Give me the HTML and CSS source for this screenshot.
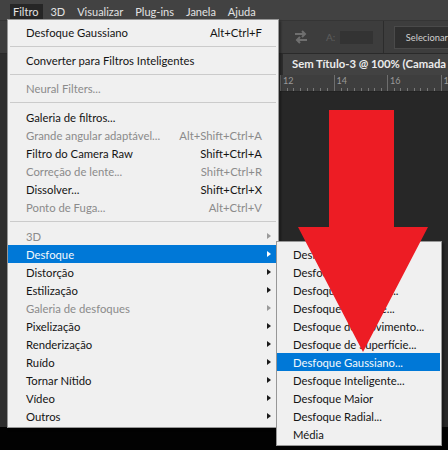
FILE: index.html
```html
<!DOCTYPE html>
<html lang="pt">
<head>
<meta charset="utf-8">
<title>Filtro</title>
<link rel="stylesheet" href="styles.css">
</head>
<body>
<div class="app">
  <div class="menubar">
    <span class="mb-item active">Filtro</span>
    <span class="mb-item">3D</span>
    <span class="mb-item">Visualizar</span>
    <span class="mb-item">Plug-ins</span>
    <span class="mb-item">Janela</span>
    <span class="mb-item">Ajuda</span>
  </div>
  <div class="optionsbar">
    <svg class="swap" width="14" height="16" viewBox="0 0 14 16"><path d="M1 5h10M8 2l3 3-3 3M13 11H3M6 8l-3 3 3 3" fill="none" stroke="#6f6f6f" stroke-width="2"/></svg>
    <span class="lbl">A:</span>
    <span class="field"></span>
    <span class="divider"></span>
    <span class="btn">Selecionar</span>
  </div>
  <div class="workspace">
    <div class="toolstrip"></div>
    <div class="docarea">
      <div class="tabbar"><div class="tab">Sem Título-3 @ 100% (Camada</div></div>
      <div class="ruler">
        <span class="seg">12</span>
        <span class="seg">14</span>
        <span class="seg">16</span>
        <span class="seg">1</span>
      </div>
      <div class="canvas"></div>
    </div>
  </div>
  <div class="bottom"></div>
</div>

<div class="menu main">
  <div class="row"><span>Desfoque Gaussiano</span><span class="sc">Alt+Ctrl+F</span></div>
  <div class="sep"></div>
  <div class="row"><span>Converter para Filtros Inteligentes</span></div>
  <div class="sep"></div>
  <div class="row dis"><span>Neural Filters...</span></div>
  <div class="sep tall"></div>
  <div class="row"><span>Galeria de filtros...</span></div>
  <div class="row dis"><span>Grande angular adaptável...</span><span class="sc">Alt+Shift+Ctrl+A</span></div>
  <div class="row"><span>Filtro do Camera Raw</span><span class="sc">Shift+Ctrl+A</span></div>
  <div class="row dis"><span>Correção de lente...</span><span class="sc">Shift+Ctrl+R</span></div>
  <div class="row"><span>Dissolver...</span><span class="sc">Shift+Ctrl+X</span></div>
  <div class="row dis"><span>Ponto de Fuga...</span><span class="sc">Alt+Ctrl+V</span></div>
  <div class="sep tall"></div>
  <div class="row dis"><span>3D</span><span class="arr"></span></div>
  <div class="row hl"><span>Desfoque</span><span class="arr"></span></div>
  <div class="row"><span>Distorção</span><span class="arr"></span></div>
  <div class="row"><span>Estilização</span><span class="arr"></span></div>
  <div class="row dis"><span>Galeria de desfoques</span><span class="arr"></span></div>
  <div class="row"><span>Pixelização</span><span class="arr"></span></div>
  <div class="row"><span>Renderização</span><span class="arr"></span></div>
  <div class="row"><span>Ruído</span><span class="arr"></span></div>
  <div class="row"><span>Tornar Nítido</span><span class="arr"></span></div>
  <div class="row"><span>Vídeo</span><span class="arr"></span></div>
  <div class="row"><span>Outros</span><span class="arr"></span></div>
</div>

<div class="menu sub">
  <div class="row"><span>Desfoque</span></div>
  <div class="row"><span>Desfoque de Caixa...</span></div>
  <div class="row"><span>Desfoque de Forma...</span></div>
  <div class="row"><span>Desfoque de Lente...</span></div>
  <div class="row"><span>Desfoque de Movimento...</span></div>
  <div class="row"><span>Desfoque de Superfície...</span></div>
  <div class="row hl"><span>Desfoque Gaussiano...</span></div>
  <div class="row"><span>Desfoque Inteligente...</span></div>
  <div class="row"><span>Desfoque Maior</span></div>
  <div class="row"><span>Desfoque Radial...</span></div>
  <div class="row"><span>Média</span></div>
</div>

<svg class="bigarrow" width="130" height="242" viewBox="0 0 130 242">
  <polygon points="31,0 96,0 96,117 130,117 65,242 0,117 31,117" fill="#ed1c24"/>
</svg>
</body>
</html>
```

FILE: styles.css
```css
* { box-sizing: border-box; }
html, body { margin: 0; padding: 0; }
body {
  width: 448px;
  height: 450px;
  overflow: hidden;
  position: relative;
  background: #000;
  font-family: Lato, "Open Sans", sans-serif;
}

.app {
  display: flex;
  flex-direction: column;
  height: 450px;
}

/* menu bar */
.menubar {
  height: 20px;
  background: #424242;
  display: flex;
  align-items: flex-end;
  padding-left: 10px;
  gap: 4px;
  color: #e2e2e2;
  font-size: 11px;
}
.mb-item {
  height: 16px;
  line-height: 15px;
  padding: 0 5px 0 3px;
}
.mb-item.active { background: #262626; }

/* options bar */
.optionsbar {
  height: 34px;
  background: #3d3d3d;
  border-top: 1px solid #353535;
  border-bottom: 1px solid #2a2a2a;
  display: flex;
  align-items: center;
  padding-left: 294px;
}
.swap { flex: none; }
.lbl {
  margin-left: 18px;
  color: #5e5e5e;
  font-size: 10px;
}
.field {
  margin-left: 5px;
  width: 33px;
  height: 13px;
  background: #333;
}
.divider {
  margin-left: 10px;
  width: 1px;
  align-self: stretch;
  background: #2c2c2c;
}
.btn {
  margin-left: 10px;
  flex: 1;
  height: 23px;
  line-height: 22px;
  background: #2f2f2f;
  border: 1px solid #4a4a4a;
  border-right: none;
  color: #cfcfcf;
  font-size: 9.3px;
  padding-left: 11px;
  white-space: nowrap;
}

/* workspace */
.workspace {
  flex: 1;
  display: flex;
  min-height: 0;
}
.toolstrip {
  width: 280px;
  background: #2e2e2e;
}
.docarea {
  flex: 1;
  display: flex;
  flex-direction: column;
  background: #272727;
  min-width: 0;
}
.tabbar {
  height: 21px;
  background: #2e2e2e;
  padding-left: 3px;
  display: flex;
}
.tab {
  flex: 1;
  background: #424242;
  color: #ececec;
  font-weight: 700;
  font-size: 11.3px;
  line-height: 20px;
  padding-left: 9px;
  white-space: nowrap;
  overflow: hidden;
}
.ruler {
  height: 17px;
  background: #3e3e3e;
  display: flex;
  border-bottom: 1px solid #222;
}
.seg {
  flex: none;
  width: 53.5px;
  border-left: 1px solid #6e6e6e;
  color: #9a9a9a;
  font-size: 9px;
  line-height: 11px;
  padding-left: 2px;
  background: repeating-linear-gradient(to right, transparent 0 5.7px, #777 5.7px 6.7px) left bottom / 100% 3px no-repeat;
}
.canvas {
  flex: 1;
  background: #272727;
}
.bottom {
  height: 23px;
  background: #020202;
}

/* dropdown menus */
.menu {
  position: absolute;
  background: #f0f0f0;
  border: 1px solid #979797;
  font-size: 11.3px;
  color: #141414;
  box-shadow: 2px 2px 2px rgba(0, 0, 0, 0.35);
}
.menu.main {
  left: 7px;
  top: 19px;
  width: 272px;
  padding: 3px 0 2px;
}
.menu.sub {
  left: 276px;
  top: 241px;
  width: 166px;
  padding: 3px 0 2px;
}
.row {
  height: 18px;
  display: flex;
  align-items: center;
  padding: 0 16px 0 18px;
  white-space: nowrap;
}
.sub .row { padding-left: 16px; }
.sc { margin-left: auto; }
.row.dis { color: #8b8b8b; }
.row.hl { background: #0078d7; color: #f4f8fc; }
.sub .row.hl { margin-right: 1px; }
.arr {
  margin-left: auto;
  margin-right: -9px;
  width: 0;
  height: 0;
  border-top: 3.5px solid transparent;
  border-bottom: 3.5px solid transparent;
  border-left: 4px solid #1a1a1a;
}
.row.dis .arr { border-left-color: #9a9a9a; }
.row.hl .arr { border-left-color: #ffffff; }
.sep {
  height: 10px;
  display: flex;
  align-items: center;
  padding: 0 2px;
}
.sep.tall { height: 11px; }
.sep::before {
  content: "";
  flex: 1;
  height: 1px;
  background: #cbcbcb;
}

.bigarrow {
  position: absolute;
  left: 298px;
  top: 110px;
}
```
